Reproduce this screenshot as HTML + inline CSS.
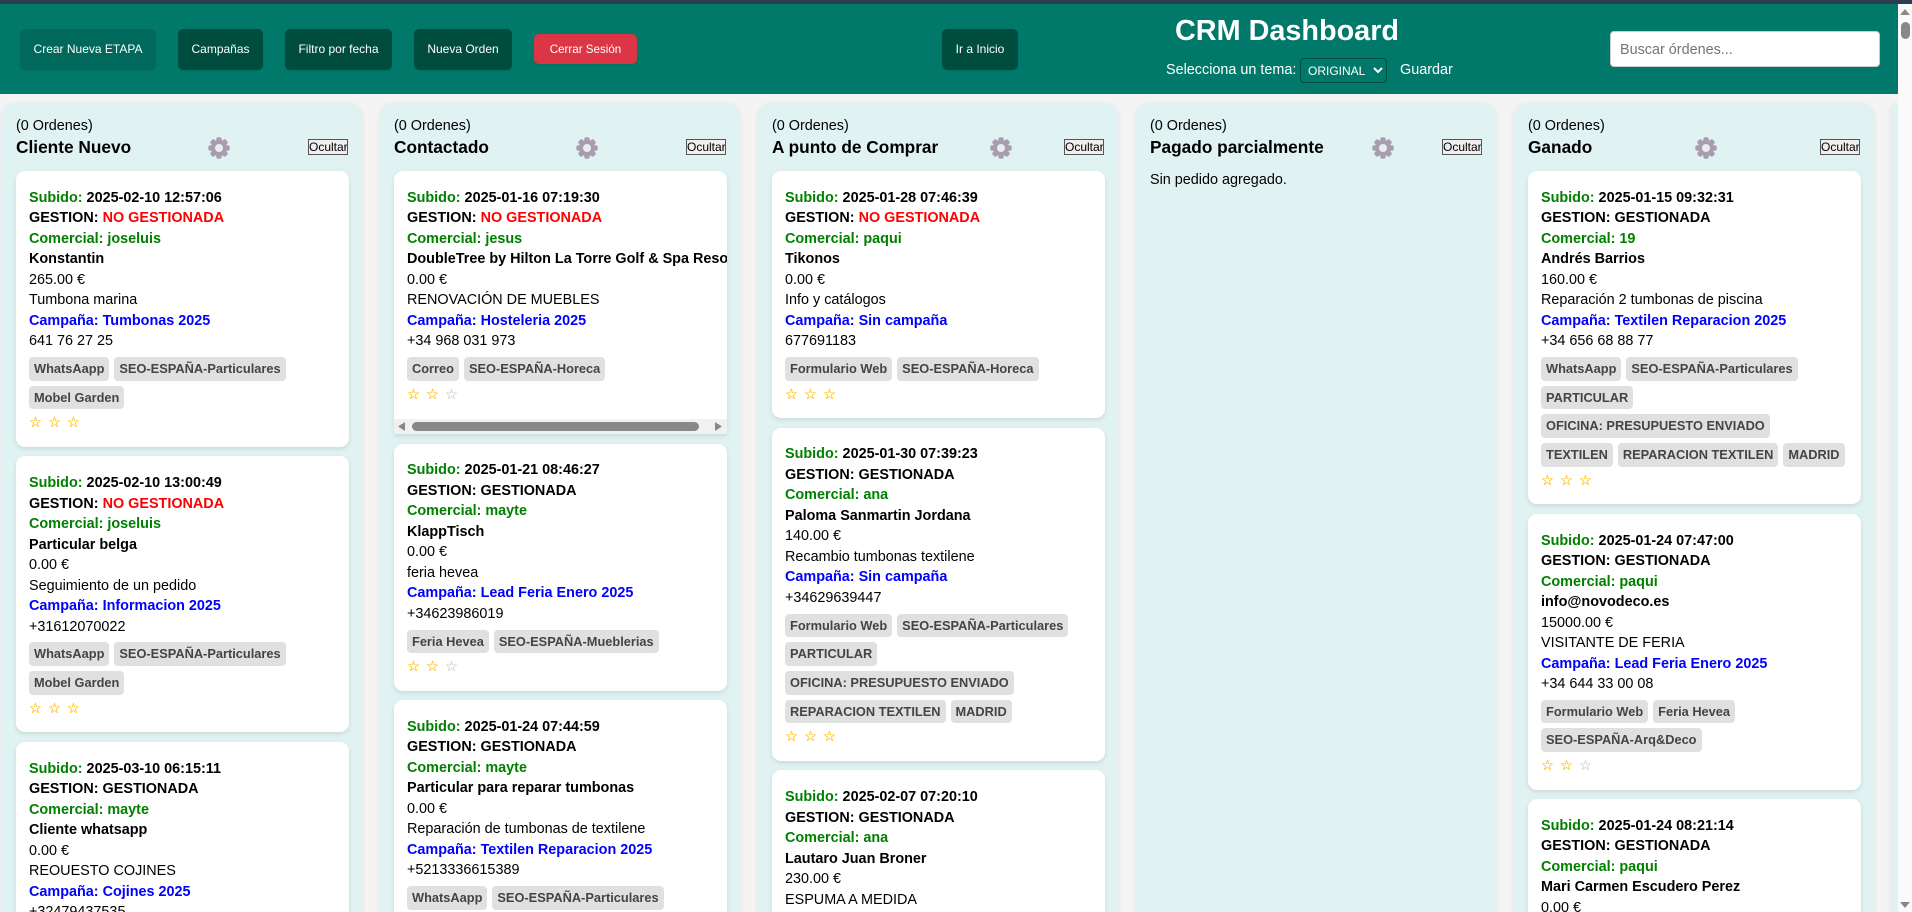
<!DOCTYPE html>
<html lang="es">
<head>
<meta charset="utf-8">
<title>CRM Dashboard</title>
<style>
*{box-sizing:border-box}
html,body{margin:0;padding:0;width:1912px;height:912px;overflow:hidden;background:#f4f4f4;font-family:"Liberation Sans",Arial,sans-serif;font-size:14.4px;color:#000}
#wrap{position:absolute;left:0;top:0;width:1912px;height:912px;overflow:hidden}
#top{position:absolute;left:0;top:0;width:1912px;height:4px;background:#2c3e50;z-index:5}
#hdr{position:absolute;left:0;top:3px;width:1898px;height:91px;background:#00796b}
.b{position:absolute;top:29px;height:41px;background:#004d40;color:#fff;border-radius:5px;font-size:12px;line-height:41px;text-align:center;white-space:nowrap;box-shadow:0 1px 2px rgba(0,0,0,.08)}
#hdr2{position:absolute;left:0;top:0;z-index:4}
#title{position:absolute;left:1175px;top:15px;font-size:28.8px;font-weight:bold;color:#fff;line-height:33px;white-space:nowrap}
.t{position:absolute;color:#fff;font-size:14.4px;line-height:18px;white-space:nowrap}
select{position:absolute;left:1300px;top:58px;width:87px;height:25px;background:#00796b;color:#fff;border:1px solid #004d40;border-radius:4px;font:12px "Liberation Sans",Arial,sans-serif;padding:0 0 0 3px}
#search{position:absolute;left:1610px;top:31px;width:270px;height:36px;background:#fff;border:1px solid #ccc;border-radius:4px;font:14.4px "Liberation Sans",Arial,sans-serif;color:#757575;line-height:36px;padding-left:9px}
.col{position:absolute;top:103px;width:360px;height:809px;background:#e0f2f1;border-radius:12px 12px 0 0;box-shadow:0 2px 6px rgba(0,0,0,.08);overflow:hidden}
.cnt{position:absolute;left:14px;top:14px;line-height:18px;font-size:14.4px;white-space:nowrap}
.ttl{position:absolute;left:14px;top:34px;line-height:20px;font-size:17.28px;font-weight:bold;white-space:nowrap}
.gear{position:absolute;top:34px;width:22px;height:22px}
.hide{position:absolute;top:36px;left:306px;width:40px;height:16px;background:#efefef;border:1px solid #555;color:#000;font-size:12px;line-height:14px;text-align:center;overflow:hidden;white-space:nowrap}
.cards{position:absolute;left:14px;top:68px;width:333px}
.card{position:relative;background:#fff;border-radius:9px;box-shadow:0 2px 5px rgba(0,0,0,.1);margin-bottom:9.5px;padding:16.75px 0 0 13px;overflow:hidden;white-space:nowrap}
.card.sb{height:263px;border-radius:9px 9px 0 0}
.l{height:20.5px;line-height:20.5px;font-size:14.4px}
.bo{font-weight:bold}
.g{color:#008000;font-weight:bold}
.r{color:#f00}
.bl{color:#00f;font-weight:bold}
.tags{display:flex;flex-wrap:wrap;gap:5px;margin-top:5.25px;width:304px}
.tag{height:23.7px;line-height:24px;padding:0 5px;background:#e0e0e0;border-radius:4px;color:#444;font-size:12.8px;font-weight:bold;white-space:nowrap}
.st{height:37.5px;padding-top:0;line-height:28px;font-size:14.4px;font-family:"DejaVu Sans",sans-serif;color:#ffb900;display:flex;-webkit-text-stroke:.2px #ffb900}
.st span{display:block;width:19px}
.st .o{color:#ccc;-webkit-text-stroke:.2px #ccc}
.hs{position:absolute;left:0;right:0;bottom:0;height:15px;background:#f1f1f1}
.hs i{position:absolute;left:18px;top:3px;width:287px;height:9px;background:#888;border-radius:5px}
.hs svg{position:absolute;top:3px}
.empty{position:absolute;left:14px;top:68px;line-height:18px;white-space:nowrap}
#vs{position:absolute;left:1898px;top:3px;width:14px;height:909px;background:#fafafa;z-index:4}
#vs i{position:absolute;left:3px;top:19px;width:9px;height:17px;background:#888;border-radius:5px}
#vs svg{position:absolute;left:2px}
</style>
</head>
<body>
<div id="wrap">
<div id="top"></div>
<div id="hdr"></div>
<div id="hdr2">
  <div class="b" style="left:20px;width:136px;background:#00695c">Crear Nueva ETAPA</div>
  <div class="b" style="left:178px;width:85px">Campañas</div>
  <div class="b" style="left:285px;width:107px">Filtro por fecha</div>
  <div class="b" style="left:414px;width:98px">Nueva Orden</div>
  <div class="b" style="left:534px;top:34px;width:103px;height:30px;line-height:31px;background:#dc3545;font-size:11.6px">Cerrar Sesión</div>
  <div class="b" style="left:942px;width:76px">Ir a Inicio</div>
  <div id="title">CRM Dashboard</div>
  <div class="t" style="left:1166px;top:61px">Selecciona un tema:</div>
  <select><option>ORIGINAL</option></select>
  <div class="t" style="left:1400px;top:61px">Guardar</div>
  <div id="search">Buscar órdenes...</div>
</div>

<svg width="0" height="0" style="position:absolute">
  <defs>
    <g id="gr">
      <g fill="#a89cb0">
        <circle cx="11" cy="11" r="8"/>
        <rect x="8.3" y="0.3" width="5.4" height="21.4" rx="2"/>
        <rect x="8.3" y="0.3" width="5.4" height="21.4" rx="2" transform="rotate(45 11 11)"/>
        <rect x="8.3" y="0.3" width="5.4" height="21.4" rx="2" transform="rotate(90 11 11)"/>
        <rect x="8.3" y="0.3" width="5.4" height="21.4" rx="2" transform="rotate(135 11 11)"/>
      </g>
      <circle cx="11" cy="11" r="4" fill="#e6eeef"/>
    </g>
  </defs>
</svg>

<!-- COL 1 -->
<div class="col" style="left:2px">
  <div class="cnt">(0 Ordenes)</div><div class="ttl">Cliente Nuevo</div>
  <svg class="gear" style="left:206px" viewBox="0 0 22 22"><use href="#gr"/></svg>
  <div class="hide">Ocultar</div>
  <div class="cards">
    <div class="card">
      <div class="l bo"><span class="g">Subido:</span> 2025-02-10 12:57:06</div>
      <div class="l bo">GESTION: <span class="r">NO GESTIONADA</span></div>
      <div class="l g">Comercial: joseluis</div>
      <div class="l bo">Konstantin</div>
      <div class="l">265.00 €</div>
      <div class="l">Tumbona marina</div>
      <div class="l bl">Campaña: Tumbonas 2025</div>
      <div class="l">641 76 27 25</div>
      <div class="tags"><span class="tag">WhatsAapp</span><span class="tag">SEO-ESPAÑA-Particulares</span><span class="tag">Mobel Garden</span></div>
      <div class="st"><span>☆</span><span>☆</span><span>☆</span></div>
    </div>
    <div class="card">
      <div class="l bo"><span class="g">Subido:</span> 2025-02-10 13:00:49</div>
      <div class="l bo">GESTION: <span class="r">NO GESTIONADA</span></div>
      <div class="l g">Comercial: joseluis</div>
      <div class="l bo">Particular belga</div>
      <div class="l">0.00 €</div>
      <div class="l">Seguimiento de un pedido</div>
      <div class="l bl">Campaña: Informacion 2025</div>
      <div class="l">+31612070022</div>
      <div class="tags"><span class="tag">WhatsAapp</span><span class="tag">SEO-ESPAÑA-Particulares</span><span class="tag">Mobel Garden</span></div>
      <div class="st"><span>☆</span><span>☆</span><span>☆</span></div>
    </div>
    <div class="card">
      <div class="l bo"><span class="g">Subido:</span> 2025-03-10 06:15:11</div>
      <div class="l bo">GESTION: GESTIONADA</div>
      <div class="l g">Comercial: mayte</div>
      <div class="l bo">Cliente whatsapp</div>
      <div class="l">0.00 €</div>
      <div class="l">REOUESTO COJINES</div>
      <div class="l bl">Campaña: Cojines 2025</div>
      <div class="l">+32479437535</div>
      <div class="tags"><span class="tag">WhatsAapp</span></div>
      <div class="st"><span>☆</span><span>☆</span><span>☆</span></div>
    </div>
  </div>
</div>

<!-- COL 2 -->
<div class="col" style="left:380px">
  <div class="cnt">(0 Ordenes)</div><div class="ttl">Contactado</div>
  <svg class="gear" style="left:196px" viewBox="0 0 22 22"><use href="#gr"/></svg>
  <div class="hide">Ocultar</div>
  <div class="cards">
    <div class="card sb">
      <div class="l bo"><span class="g">Subido:</span> 2025-01-16 07:19:30</div>
      <div class="l bo">GESTION: <span class="r">NO GESTIONADA</span></div>
      <div class="l g">Comercial: jesus</div>
      <div class="l bo">DoubleTree by Hilton La Torre Golf &amp; Spa Resort</div>
      <div class="l">0.00 €</div>
      <div class="l">RENOVACIÓN DE MUEBLES</div>
      <div class="l bl">Campaña: Hosteleria 2025</div>
      <div class="l">+34 968 031 973</div>
      <div class="tags"><span class="tag">Correo</span><span class="tag">SEO-ESPAÑA-Horeca</span></div>
      <div class="st"><span>☆</span><span>☆</span><span class="o">☆</span></div>
      <div class="hs">
        <svg style="left:4px" width="8" height="9" viewBox="0 0 8 9"><path d="M7 0V9L0 4.5Z" fill="#888"/></svg>
        <i></i>
        <svg style="left:321px" width="8" height="9" viewBox="0 0 8 9"><path d="M0 0V9L7 4.5Z" fill="#888"/></svg>
      </div>
    </div>
    <div class="card">
      <div class="l bo"><span class="g">Subido:</span> 2025-01-21 08:46:27</div>
      <div class="l bo">GESTION: GESTIONADA</div>
      <div class="l g">Comercial: mayte</div>
      <div class="l bo">KlappTisch</div>
      <div class="l">0.00 €</div>
      <div class="l">feria hevea</div>
      <div class="l bl">Campaña: Lead Feria Enero 2025</div>
      <div class="l">+34623986019</div>
      <div class="tags"><span class="tag">Feria Hevea</span><span class="tag">SEO-ESPAÑA-Mueblerias</span></div>
      <div class="st"><span>☆</span><span>☆</span><span class="o">☆</span></div>
    </div>
    <div class="card">
      <div class="l bo"><span class="g">Subido:</span> 2025-01-24 07:44:59</div>
      <div class="l bo">GESTION: GESTIONADA</div>
      <div class="l g">Comercial: mayte</div>
      <div class="l bo">Particular para reparar tumbonas</div>
      <div class="l">0.00 €</div>
      <div class="l">Reparación de tumbonas de textilene</div>
      <div class="l bl">Campaña: Textilen Reparacion 2025</div>
      <div class="l">+5213336615389</div>
      <div class="tags"><span class="tag">WhatsAapp</span><span class="tag">SEO-ESPAÑA-Particulares</span></div>
      <div class="st"><span>☆</span><span>☆</span><span>☆</span></div>
    </div>
  </div>
</div>

<!-- COL 3 -->
<div class="col" style="left:758px">
  <div class="cnt">(0 Ordenes)</div><div class="ttl">A punto de Comprar</div>
  <svg class="gear" style="left:232px" viewBox="0 0 22 22"><use href="#gr"/></svg>
  <div class="hide">Ocultar</div>
  <div class="cards">
    <div class="card">
      <div class="l bo"><span class="g">Subido:</span> 2025-01-28 07:46:39</div>
      <div class="l bo">GESTION: <span class="r">NO GESTIONADA</span></div>
      <div class="l g">Comercial: paqui</div>
      <div class="l bo">Tikonos</div>
      <div class="l">0.00 €</div>
      <div class="l">Info y catálogos</div>
      <div class="l bl">Campaña: Sin campaña</div>
      <div class="l">677691183</div>
      <div class="tags"><span class="tag">Formulario Web</span><span class="tag">SEO-ESPAÑA-Horeca</span></div>
      <div class="st"><span>☆</span><span>☆</span><span>☆</span></div>
    </div>
    <div class="card">
      <div class="l bo"><span class="g">Subido:</span> 2025-01-30 07:39:23</div>
      <div class="l bo">GESTION: GESTIONADA</div>
      <div class="l g">Comercial: ana</div>
      <div class="l bo">Paloma Sanmartin Jordana</div>
      <div class="l">140.00 €</div>
      <div class="l">Recambio tumbonas textilene</div>
      <div class="l bl">Campaña: Sin campaña</div>
      <div class="l">+34629639447</div>
      <div class="tags"><span class="tag">Formulario Web</span><span class="tag">SEO-ESPAÑA-Particulares</span><span class="tag">PARTICULAR</span><span class="tag">OFICINA: PRESUPUESTO ENVIADO</span><span class="tag">REPARACION TEXTILEN</span><span class="tag">MADRID</span></div>
      <div class="st"><span>☆</span><span>☆</span><span>☆</span></div>
    </div>
    <div class="card">
      <div class="l bo"><span class="g">Subido:</span> 2025-02-07 07:20:10</div>
      <div class="l bo">GESTION: GESTIONADA</div>
      <div class="l g">Comercial: ana</div>
      <div class="l bo">Lautaro Juan Broner</div>
      <div class="l">230.00 €</div>
      <div class="l">ESPUMA A MEDIDA</div>
      <div class="l bl">Campaña: Sin campaña</div>
      <div class="l">&nbsp;</div>
      <div class="l">&nbsp;</div>
    </div>
  </div>
</div>

<!-- COL 4 -->
<div class="col" style="left:1136px">
  <div class="cnt">(0 Ordenes)</div><div class="ttl">Pagado parcialmente</div>
  <svg class="gear" style="left:236px" viewBox="0 0 22 22"><use href="#gr"/></svg>
  <div class="hide">Ocultar</div>
  <div class="empty">Sin pedido agregado.</div>
</div>

<!-- COL 5 -->
<div class="col" style="left:1514px">
  <div class="cnt">(0 Ordenes)</div><div class="ttl">Ganado</div>
  <svg class="gear" style="left:181px" viewBox="0 0 22 22"><use href="#gr"/></svg>
  <div class="hide">Ocultar</div>
  <div class="cards">
    <div class="card">
      <div class="l bo"><span class="g">Subido:</span> 2025-01-15 09:32:31</div>
      <div class="l bo">GESTION: GESTIONADA</div>
      <div class="l g">Comercial: 19</div>
      <div class="l bo">Andrés Barrios</div>
      <div class="l">160.00 €</div>
      <div class="l">Reparación 2 tumbonas de piscina</div>
      <div class="l bl">Campaña: Textilen Reparacion 2025</div>
      <div class="l">+34 656 68 88 77</div>
      <div class="tags"><span class="tag">WhatsAapp</span><span class="tag">SEO-ESPAÑA-Particulares</span><span class="tag">PARTICULAR</span><span class="tag">OFICINA: PRESUPUESTO ENVIADO</span><span class="tag">TEXTILEN</span><span class="tag">REPARACION TEXTILEN</span><span class="tag">MADRID</span></div>
      <div class="st"><span>☆</span><span>☆</span><span>☆</span></div>
    </div>
    <div class="card">
      <div class="l bo"><span class="g">Subido:</span> 2025-01-24 07:47:00</div>
      <div class="l bo">GESTION: GESTIONADA</div>
      <div class="l g">Comercial: paqui</div>
      <div class="l bo">info@novodeco.es</div>
      <div class="l">15000.00 €</div>
      <div class="l">VISITANTE DE FERIA</div>
      <div class="l bl">Campaña: Lead Feria Enero 2025</div>
      <div class="l">+34 644 33 00 08</div>
      <div class="tags"><span class="tag">Formulario Web</span><span class="tag">Feria Hevea</span><span class="tag">SEO-ESPAÑA-Arq&amp;Deco</span></div>
      <div class="st"><span>☆</span><span>☆</span><span class="o">☆</span></div>
    </div>
    <div class="card">
      <div class="l bo"><span class="g">Subido:</span> 2025-01-24 08:21:14</div>
      <div class="l bo">GESTION: GESTIONADA</div>
      <div class="l g">Comercial: paqui</div>
      <div class="l bo">Mari Carmen Escudero Perez</div>
      <div class="l">0.00 €</div>
      <div class="l">&nbsp;</div>
      <div class="l">&nbsp;</div>
    </div>
  </div>
</div>

<!-- COL 6 (clipped) -->
<div class="col" style="left:1891px;width:7px"></div>

<div id="vs">
  <svg style="top:6px" width="10" height="7" viewBox="0 0 10 7"><path d="M5 0L10 6H0Z" fill="#888"/></svg>
  <i></i>
  <svg style="top:899px" width="10" height="7" viewBox="0 0 10 7"><path d="M0 0H10L5 6Z" fill="#888"/></svg>
</div>
</div>
</body>
</html>
